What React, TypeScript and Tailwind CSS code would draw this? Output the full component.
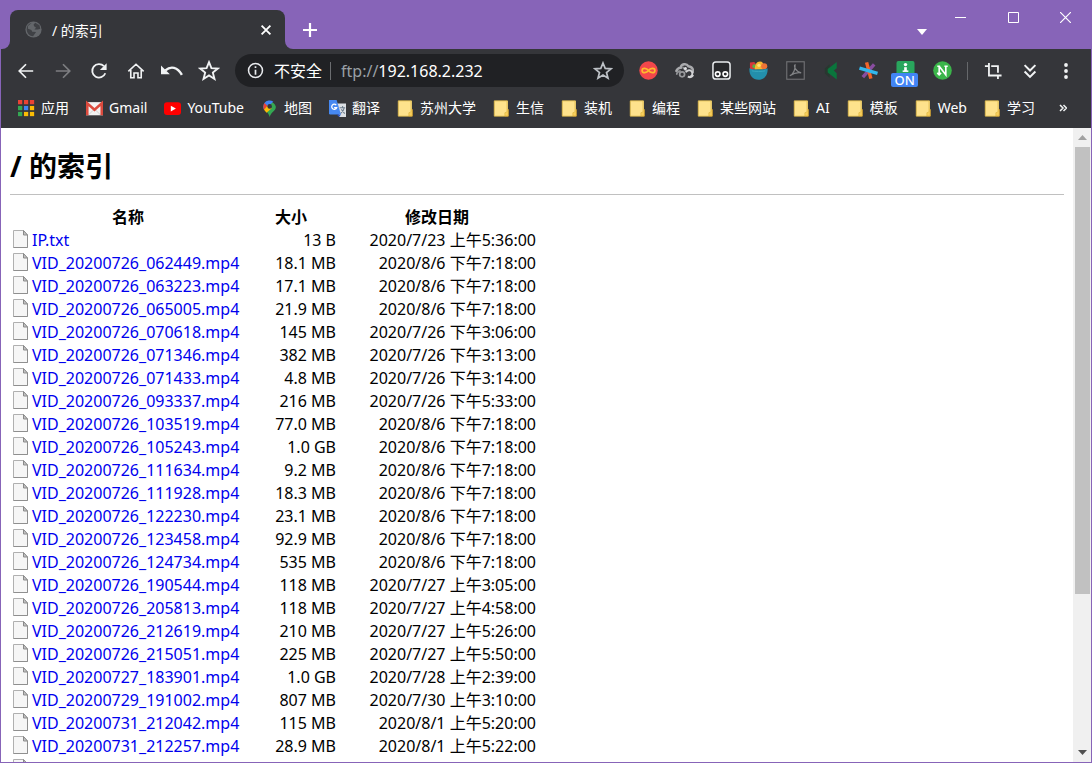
import type { ReactNode } from "react"

const files = [
  { name: "IP.txt", size: "13 B", date: "2020/7/23 上午5:36:00" },
  { name: "VID_20200726_062449.mp4", size: "18.1 MB", date: "2020/8/6 下午7:18:00" },
  { name: "VID_20200726_063223.mp4", size: "17.1 MB", date: "2020/8/6 下午7:18:00" },
  { name: "VID_20200726_065005.mp4", size: "21.9 MB", date: "2020/8/6 下午7:18:00" },
  { name: "VID_20200726_070618.mp4", size: "145 MB", date: "2020/7/26 下午3:06:00" },
  { name: "VID_20200726_071346.mp4", size: "382 MB", date: "2020/7/26 下午3:13:00" },
  { name: "VID_20200726_071433.mp4", size: "4.8 MB", date: "2020/7/26 下午3:14:00" },
  { name: "VID_20200726_093337.mp4", size: "216 MB", date: "2020/7/26 下午5:33:00" },
  { name: "VID_20200726_103519.mp4", size: "77.0 MB", date: "2020/8/6 下午7:18:00" },
  { name: "VID_20200726_105243.mp4", size: "1.0 GB", date: "2020/8/6 下午7:18:00" },
  { name: "VID_20200726_111634.mp4", size: "9.2 MB", date: "2020/8/6 下午7:18:00" },
  { name: "VID_20200726_111928.mp4", size: "18.3 MB", date: "2020/8/6 下午7:18:00" },
  { name: "VID_20200726_122230.mp4", size: "23.1 MB", date: "2020/8/6 下午7:18:00" },
  { name: "VID_20200726_123458.mp4", size: "92.9 MB", date: "2020/8/6 下午7:18:00" },
  { name: "VID_20200726_124734.mp4", size: "535 MB", date: "2020/8/6 下午7:18:00" },
  { name: "VID_20200726_190544.mp4", size: "118 MB", date: "2020/7/27 上午3:05:00" },
  { name: "VID_20200726_205813.mp4", size: "118 MB", date: "2020/7/27 上午4:58:00" },
  { name: "VID_20200726_212619.mp4", size: "210 MB", date: "2020/7/27 上午5:26:00" },
  { name: "VID_20200726_215051.mp4", size: "225 MB", date: "2020/7/27 上午5:50:00" },
  { name: "VID_20200727_183901.mp4", size: "1.0 GB", date: "2020/7/28 上午2:39:00" },
  { name: "VID_20200729_191002.mp4", size: "807 MB", date: "2020/7/30 上午3:10:00" },
  { name: "VID_20200731_212042.mp4", size: "115 MB", date: "2020/8/1 上午5:20:00" },
  { name: "VID_20200731_212257.mp4", size: "28.9 MB", date: "2020/8/1 上午5:22:00" },
]

function Icon({ children, className = "size-5" }: { children: ReactNode; className?: string }) {
  return (
    <svg viewBox="0 0 20 20" className={`shrink-0 ${className}`} fill="none" aria-hidden="true">
      {children}
    </svg>
  )
}

function IconButton({ label, className = "", children }: { label: string; className?: string; children: ReactNode }) {
  return (
    <button type="button" aria-label={label} className={`flex shrink-0 items-center justify-center ${className}`}>
      {children}
    </button>
  )
}

const STAR = "M10 2l2.200 5.400 5.800.4-4.500 3.700 1.500 5.700-5-3.200-5 3.200 1.500-5.700L2 7.800l5.800-.4z"

const navButtons = [
  {
    label: "后退",
    icon: <path d="M18 10H3.500M10 2.500L2.500 10l7.500 7.500" stroke="#f1f3f4" strokeWidth="1.900" />,
  },
  {
    label: "前进",
    icon: <path d="M2 10h14.500M10 2.500l7.500 7.500-7.500 7.500" stroke="#7d7e81" strokeWidth="1.900" />,
  },
  {
    label: "重新加载",
    icon: (
      <>
        <path d="M17 12.500A7.500 7.500 0 1 1 15.500 4.700" stroke="#f1f3f4" strokeWidth="2" />
        <path d="M18.500 1.500V9H11z" fill="#f1f3f4" />
      </>
    ),
  },
  {
    label: "主页",
    icon: <path d="M1.500 10.500L10 2.500l8.500 8M4.200 9V17.500h3.600v-5.300h4.400v5.300h3.600V9" stroke="#f1f3f4" strokeWidth="1.800" />,
  },
  {
    label: "撤消",
    icon: (
      <>
        <path d="M4 9.500c5-4.500 11-3 15 4" stroke="#f1f3f4" strokeWidth="2.200" />
        <path d="M0 5v8h8z" fill="#f1f3f4" />
      </>
    ),
  },
  { label: "收藏", icon: <path d={STAR} stroke="#f1f3f4" strokeWidth="1.700" /> },
]

const extensions = [
  {
    label: "Infinity",
    icon: (
      <>
        <circle cx="10" cy="10" r="9.700" fill="#f2474b" />
        <path d="M10 10C8 7.300 3.300 6.500 3.300 10S8 12.700 10 10s6.700-3.500 6.700 0S12 12.700 10 10z" stroke="#fdb92e" strokeWidth="1.900" />
      </>
    ),
  },
  {
    label: "Proxy",
    icon: (
      <>
        <path d="M1 11.500C2 8.500 4 7 6 7c.5-4 6-5 8-1.500 3.500.5 5.500 3 5 7" stroke="#a9aaad" strokeWidth="2.600" />
        <path d="M2 14.500a3 3 0 0 1 4-3.500M8 6.500l4 4" stroke="#8f9194" strokeWidth="2" />
        <circle cx="7.500" cy="14" r="2.600" stroke="#97989b" strokeWidth="1.800" />
        <path d="M11.500 12a3.500 3.500 0 1 1 2 4.500c3 1.500 5 0 5.500-2" stroke="#d2d3d5" strokeWidth="2" />
        <circle cx="11" cy="8" r="1.600" fill="#e0e1e3" />
      </>
    ),
  },
  {
    label: "Tampermonkey",
    icon: (
      <>
        <rect x="1" y="1" width="18" height="18" rx="3" fill="#27282b" stroke="#e8eaed" strokeWidth="1.600" />
        <circle cx="6" cy="13.800" r="2.400" stroke="#fff" strokeWidth="1.700" />
        <circle cx="14" cy="13.800" r="2.400" stroke="#fff" strokeWidth="1.700" />
      </>
    ),
  },
  {
    label: "沙拉查词",
    icon: (
      <>
        <path d="M1 9V1.500L5.500 1 8 4v5z" fill="#d7343b" />
        <circle cx="5.500" cy="5.500" r="2" fill="#5cab46" />
        <path d="M6 9c0-5 2-8.500 5.500-8.500S16 4 15 9z" fill="#f6b82f" />
        <circle cx="16" cy="5.500" r="3.200" fill="#ee7435" />
        <circle cx="10.500" cy="4.500" r="1.700" fill="#fddd79" />
        <path d="M.4 7.500C3 9.500 17 9.500 19.600 7.500c.4 7-3 12-9.600 12.200C3.400 19.500 0 14.500.4 7.500z" fill="#238fab" />
        <path d="M3 10.300c3 1 11 1 14 0" stroke="#38a6bd" />
      </>
    ),
  },
  {
    label: "PDF",
    icon: (
      <>
        <rect x=".8" y=".8" width="18.400" height="18.400" fill="#303135" stroke="#707174" strokeWidth="1.200" />
        <path d="M4 15.500c4-2 6-7 5.500-11.500-1.500.5 0 7 6.500 8.500-4-.8-8 .5-12 3z" stroke="#838487" strokeWidth="1.300" />
      </>
    ),
  },
  {
    label: "Kami",
    icon: (
      <>
        <path d="M3 8l5-4.500v14L3 13z" fill="#27382f" />
        <path d="M15.500 1v6.500L12.500 10l3 3v6.500L6 12V8.500z" fill="#0a753c" />
      </>
    ),
  },
  {
    label: "Asterisk",
    icon: (
      <>
        <path d="M4 17L16 3.500" stroke="#894da0" strokeWidth="3.600" />
        <path d="M8 1.500l4.500 17" stroke="#f16529" strokeWidth="3.600" />
        <path d="M.5 7.500l19 5.500" stroke="#32b8ed" strokeWidth="3.600" />
      </>
    ),
  },
  {
    label: "Toggle",
    badge: "ON",
    icon: (
      <>
        <rect x=".5" y="0" width="19" height="19" rx="2" fill="#29a65d" />
        <circle cx="10" cy="3.800" r="1.800" fill="#fff" />
        <path d="M10 6.500v4" stroke="#fff" strokeWidth="2.800" />
        <path d="M7 10.700h6" stroke="#fff" strokeWidth="1.600" />
      </>
    ),
  },
  {
    label: "Notes",
    icon: (
      <>
        <circle cx="10" cy="10" r="9.800" fill="#3bb54a" />
        <path d="M4.500 5.500h3M6.500 5.500V14M4.500 12.500l2 2 2-2M6.500 5.500L13.500 14.500V5.500M12 5.500h3.500" stroke="#fff" strokeWidth="1.700" />
      </>
    ),
  },
]

const folderIcon = (
  <>
    <path d="M1.500 1h16v18h-16z" fill="#fee28c" />
    <path d="M18 11v8h-4v-4l2.500-1V11z" fill="#f8cf5c" />
    <path d="M17 1H1.500v18h12.500v-4l2.500-1V1" stroke="#e3bd4c" strokeWidth="1" />
    <path d="M14 19h4V11" stroke="#d9a832" />
  </>
)

const appColors = ["#ea4335", "#ea4335", "#ea4335", "#34a853", "#4285f4", "#fbbc05", "#34a853", "#fbbc05", "#fbbc05"]

const bookmarks = [
  {
    label: "应用",
    icon: appColors.map((c, i) => (
      <rect key={i} x={(i % 3) * 7} y={Math.floor(i / 3) * 7} width="5" height="5" fill={c} />
    )),
  },
  {
    label: "Gmail",
    icon: (
      <>
        <path d="M0 2.500h20v15.500H0z" fill="#f2f2f2" />
        <path d="M3 17.500l7-7 7 7" stroke="#c9c9c9" />
        <path d="M1.500 18V4L10 11.500 18.500 4v14" stroke="#dc4a3d" strokeWidth="3" />
      </>
    ),
  },
  {
    label: "YouTube",
    icon: (
      <>
        <rect x="0" y="2.500" width="20" height="15" rx="3.500" fill="#f00" />
        <path d="M8 6.800l6 3.300-6 3.300z" fill="#fff" />
      </>
    ),
  },
  {
    label: "地图",
    icon: (
      <>
        <path d="M3 8a7.500 7.500 0 0 1 14.500 0c0 5-5.500 6-7.300 12C9 14 3 13 3 8z" fill="#34a853" />
        <path d="M3.600 11.500L14.500 2A7.500 7.500 0 0 0 4 3.500C2.500 6 2.500 9 3.600 11.500z" fill="#4285f4" />
        <path d="M4 3.500L8 7l-4.400 4.700C2.400 9 2.700 5.500 4 3.500z" fill="#ea4335" />
        <path d="M3.600 11.500l4-4.700 5 3L6.500 15z" fill="#fbbc05" />
        <circle cx="10.200" cy="7.500" r="2.700" fill="#35363a" />
      </>
    ),
  },
  {
    label: "翻译",
    icon: (
      <>
        <path d="M9 4h11v16h-8z" fill="#dce0e5" />
        <path d="M12.500 9H19M16 7v2M18 9c-.5 3-2 5-4.500 7M14.500 11l4 5" stroke="#6c7c8c" strokeWidth="1.200" />
        <path d="M0 0h9l5 17H1.500A1.500 1.500 0 0 1 0 15.500z" fill="#4688f1" />
        <path d="M9 17h5l-2 3z" fill="#2a56c6" />
        <path d="M8.500 6A3 3 0 1 0 9 9H6" stroke="#fff" strokeWidth="1.500" />
      </>
    ),
  },
  { label: "苏州大学", icon: folderIcon },
  { label: "生信", icon: folderIcon },
  { label: "装机", icon: folderIcon },
  { label: "编程", icon: folderIcon },
  { label: "某些网站", icon: folderIcon },
  { label: "AI", icon: folderIcon },
  { label: "模板", icon: folderIcon },
  { label: "Web", icon: folderIcon },
  { label: "学习", icon: folderIcon },
]

function TitleBar() {
  return (
    <div className="flex h-12 shrink-0 justify-between">
      <div className="flex items-end">
        <div className="h-[39px] w-[9px] overflow-hidden bg-[#35363a]">
          <div className="size-full rounded-br-lg bg-[#8764b8]" />
        </div>
        <div className="flex h-[39px] w-[275px] items-center rounded-t-lg bg-[#35363a] pr-[11px] pl-[15px]">
          <Icon className="size-[17px]">
            <circle cx="10" cy="10" r="9.500" fill="#63666a" />
            <path d="M8 2L3.500 6v3l4 1.500 1 2L13 13l-3.500 5A8 8 0 0 1 2 10a8 8 0 0 1 6-8zM12 2l-2 2.500 1 2 2 1.500-2 2h4l3-1-1-4z" fill="#3f4145" />
          </Icon>
          <span className="ml-2.5 flex-1 pt-0.5 text-sm">/ 的索引</span>
          <IconButton label="关闭标签页" className="size-4">
            <Icon className="size-4">
              <path d="M4.500 4.500l11 11M15.500 4.500l-11 11" stroke="#fff" strokeWidth="2.300" />
            </Icon>
          </IconButton>
        </div>
        <div className="h-[39px] w-2 bg-[#35363a]">
          <div className="size-full rounded-bl-lg bg-[#8764b8]" />
        </div>
        <IconButton label="新标签页" className="ml-[7px] h-[39px] w-5">
          <Icon className="size-5">
            <path d="M10 3v14M3 10h14" stroke="#fff" strokeWidth="2.200" />
          </Icon>
        </IconButton>
      </div>
      <div className="flex">
        <IconButton label="搜索标签页" className="w-6 pt-3.5">
          <svg viewBox="0 0 10 6" className="h-1.5 w-2.5" aria-hidden="true">
            <path d="M0 0h10L5 6z" fill="#fff" />
          </svg>
        </IconButton>
        <IconButton label="最小化" className="h-8 w-[53px]">
          <svg viewBox="0 0 11 11" className="size-[11px]" aria-hidden="true">
            <path d="M0 5.500h11" stroke="#fff" />
          </svg>
        </IconButton>
        <IconButton label="最大化" className="h-8 w-[53px]">
          <svg viewBox="0 0 11 11" className="size-[11px]" fill="none" aria-hidden="true">
            <path d="M.5.5h10v10H.5z" stroke="#fff" />
          </svg>
        </IconButton>
        <IconButton label="关闭" className="h-8 w-[51px]">
          <svg viewBox="0 0 11 11" className="size-[11px]" aria-hidden="true">
            <path d="M0 0l11 11M11 0L0 11" stroke="#fff" strokeWidth="1.200" />
          </svg>
        </IconButton>
      </div>
    </div>
  )
}

function Toolbar() {
  return (
    <div className="flex h-[43px] shrink-0 items-center bg-[#35363a] pr-[15px] pl-[15px]">
      <nav className="flex w-[203px] shrink-0 justify-between">
        {navButtons.map((b) => (
          <IconButton key={b.label} label={b.label} className="size-5">
            <Icon className={b.label === "收藏" || b.label === "撤消" ? "size-[22px]" : "size-[18px]"}>{b.icon}</Icon>
          </IconButton>
        ))}
      </nav>
      <div className="ml-4 flex h-[33px] min-w-0 flex-1 items-center rounded-full bg-[#202124] pr-3 pl-3">
        <Icon className="size-[17px]">
          <circle cx="10" cy="10" r="8.200" stroke="#e8eaed" strokeWidth="1.800" />
          <path d="M10 9v6M10 5v2" stroke="#e8eaed" strokeWidth="2" />
        </Icon>
        <span className="ml-2.5 shrink-0 text-base">不安全</span>
        <span className="mx-2 h-[18px] w-px shrink-0 bg-[#6b6d70]" />
        <label htmlFor="address" className="ml-0.5 shrink-0 text-base text-[#9aa0a6]">
          ftp://
        </label>
        <input id="address" type="text" defaultValue="192.168.2.232" className="min-w-0 flex-1 bg-transparent text-base outline-none" />
        <IconButton label="为此标签页添加书签" className="size-[18px]">
          <Icon className="size-5">
            <path d={STAR} stroke="#bdc1c6" strokeWidth="1.700" />
          </Icon>
        </IconButton>
      </div>
      <div className="ml-3.5 flex w-[314px] shrink-0 justify-between">
        {extensions.map((e) => (
          <IconButton key={e.label} label={e.label} className="relative size-5">
            <Icon className="size-[19px]">{e.icon}</Icon>
            {e.badge && (
              <span className="absolute top-3 -left-1 h-[14px] w-[27px] rounded-xs bg-[#4285f4] text-center text-[13px] leading-[14px] font-medium">
                {e.badge}
              </span>
            )}
          </IconButton>
        ))}
      </div>
      <span className="ml-[15px] h-[18px] w-px shrink-0 bg-[#66686b]" />
      <div className="ml-[15px] flex w-[93px] shrink-0 justify-between">
        <IconButton label="截图" className="size-5">
          <Icon className="size-[18px]">
            <path d="M5.500 1v14h14M1 4.500h4.500M8 4.500h7.500V12M15.500 15v4" stroke="#f1f3f4" strokeWidth="2" />
          </Icon>
        </IconButton>
        <IconButton label="更多扩展程序" className="size-5">
          <Icon className="size-[18px]">
            <path d="M4 3.500l6 6 6-6M4 10.500l6 6 6-6" stroke="#f1f3f4" strokeWidth="2.200" />
          </Icon>
        </IconButton>
        <IconButton label="菜单" className="size-5">
          <Icon className="size-5">
            <circle cx="10" cy="4" r="1.900" fill="#f1f3f4" />
            <circle cx="10" cy="10" r="1.900" fill="#f1f3f4" />
            <circle cx="10" cy="16" r="1.900" fill="#f1f3f4" />
          </Icon>
        </IconButton>
      </div>
    </div>
  )
}

function BookmarksBar() {
  return (
    <div className="flex h-9 shrink-0 items-center justify-between bg-[#35363a] pr-6 pb-1 pl-[17px]">
      <div className="flex min-w-0 gap-[17px] overflow-hidden">
        {bookmarks.map((b) => (
          <a key={b.label} href="#" className="flex shrink-0 items-center gap-1.5 text-sm leading-5 whitespace-nowrap">
            <Icon className="size-[17px]">{b.icon}</Icon>
            {b.label}
          </a>
        ))}
      </div>
      <IconButton label="其他书签" className="w-2">
        <svg viewBox="0 0 8 8" className="size-2" fill="none" aria-hidden="true">
          <path d="M1 1l3 3-3 3M4.500 1l3 3-3 3" stroke="#f1f3f4" strokeWidth="1.500" />
        </svg>
      </IconButton>
    </div>
  )
}

function FileIcon() {
  return (
    <svg viewBox="0 0 15 18" className="h-[18px] w-[15px] shrink-0" aria-hidden="true">
      <path d="M.5.500h10l4 4.500v12.500H.5z" fill="#f6f6f6" stroke="#b0b0b0" />
      <path d="M14.500 5v12.500H.5" fill="none" stroke="#8f8f8f" />
      <path d="M10.500.500V5h4z" fill="#c4c4c4" stroke="#8a8a8a" />
    </svg>
  )
}

function DirectoryListing() {
  return (
    <main className="min-w-0 flex-1 overflow-hidden px-[9px] pt-[18px]">
      <h1 className="mb-2.5 border-b border-[#c0c0c0] pb-2 text-[28px] leading-10 font-bold">/ 的索引</h1>
      <table className="w-[528px] table-fixed border-separate border-spacing-0.5 text-base leading-[21px] whitespace-nowrap">
        <thead>
          <tr>
            <th className="w-[232px] p-0">名称</th>
            <th className="w-[90px] p-0">大小</th>
            <th className="p-0">修改日期</th>
          </tr>
        </thead>
        <tbody>
          {files.map((file) => (
            <tr key={file.name}>
              <td className="p-0">
                <a href="#" className="flex h-[21px] gap-1 pl-px text-[#0000ee]">
                  <FileIcon />
                  {file.name}
                </a>
              </td>
              <td className="p-0 text-right">{file.size}</td>
              <td className="p-0 text-right">{file.date}</td>
            </tr>
          ))}
          <tr>
            <td className="p-0 pl-px">
              <FileIcon />
            </td>
          </tr>
        </tbody>
      </table>
    </main>
  )
}

function Scrollbar() {
  return (
    <div className="flex w-[18px] shrink-0 flex-col items-center bg-[#f0f0f0]">
      <IconButton label="向上滚动" className="h-[19px] w-full">
        <svg viewBox="0 0 9 5" className="h-[5px] w-[9px]" aria-hidden="true">
          <path d="M0 5h9L4.500 0z" fill="#a0a0a0" />
        </svg>
      </IconButton>
      <div className="w-[15px] flex-1">
        <div className="h-3/4 bg-[#c1c1c1]" />
      </div>
      <IconButton label="向下滚动" className="h-[19px] w-full">
        <svg viewBox="0 0 9 5" className="h-[5px] w-[9px]" aria-hidden="true">
          <path d="M0 0h9L4.500 5z" fill="#505050" />
        </svg>
      </IconButton>
    </div>
  )
}

export default function App() {
  return (
    <div className="flex h-screen flex-col overflow-hidden border border-[#8764b8] bg-[#8764b8] font-['Noto_Sans','Noto_Sans_CJK_SC',sans-serif] text-white">
      <TitleBar />
      <Toolbar />
      <BookmarksBar />
      <div className="flex min-h-0 flex-1 bg-white text-black">
        <DirectoryListing />
        <Scrollbar />
      </div>
    </div>
  )
}
